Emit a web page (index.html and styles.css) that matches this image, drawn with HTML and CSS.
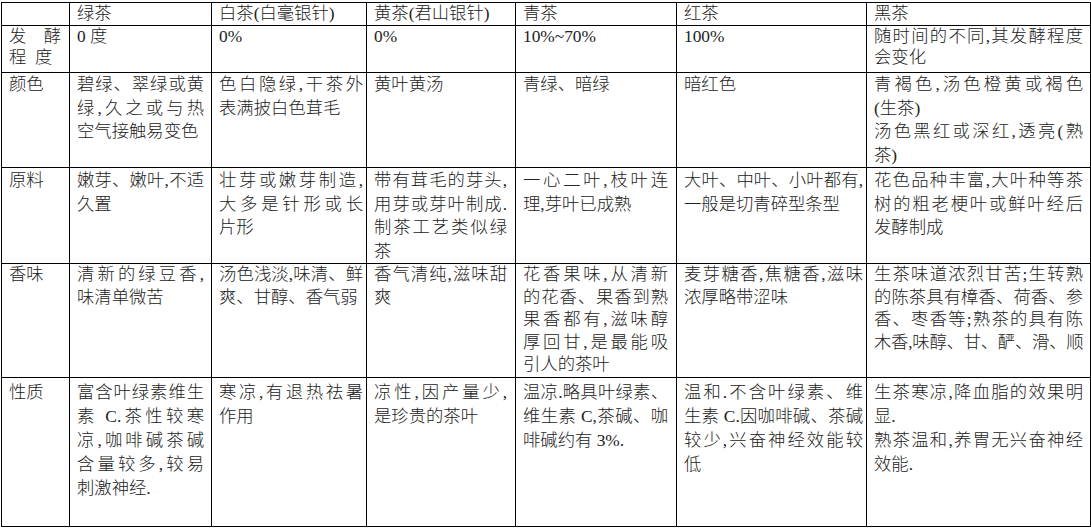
FILE: index.html
```html
<!DOCTYPE html>
<html lang="zh-CN">
<head>
<meta charset="utf-8">
<title>六大茶类对比</title>
<link rel="stylesheet" href="styles.css">
</head>
<body>
<table class="tea">
  <colgroup>
    <col class="k1"><col class="k2"><col class="k3"><col class="k4"><col class="k5"><col class="k6"><col class="k7">
  </colgroup>
  <tr class="r1">
    <td></td><td>绿茶</td><td>白茶(白毫银针)</td><td>黄茶(君山银针)</td><td>青茶</td><td>红茶</td><td>黑茶</td>
  </tr>
  <tr class="r2">
    <td><span class="l">发 酵</span>程&ensp;度</td>
    <td>0 度</td>
    <td>0%</td>
    <td>0%</td>
    <td>10%~70%</td>
    <td>100%</td>
    <td><span class="l">随时间的不同,其发酵程度</span>会变化</td>
  </tr>
  <tr class="r3">
    <td>颜色</td>
    <td><span class="l">碧绿、翠绿或黄</span><span class="l">绿,久之或与热</span>空气接触易变色</td>
    <td><span class="l">色白隐绿,干茶外</span>表满披白色茸毛</td>
    <td>黄叶黄汤</td>
    <td>青绿、暗绿</td>
    <td>暗红色</td>
    <td><span class="l">青褐色,汤色橙黄或褐色</span>(生茶)<span class="l">汤色黑红或深红,透亮(熟</span>茶)</td>
  </tr>
  <tr class="r4">
    <td>原料</td>
    <td><span class="l">嫩芽、嫩叶,不适</span>久置</td>
    <td><span class="l">壮芽或嫩芽制造,</span><span class="l">大多是针形或长</span>片形</td>
    <td><span class="l">带有茸毛的芽头,</span><span class="l">用芽或芽叶制成.</span><span class="l">制茶工艺类似绿</span>茶</td>
    <td><span class="l">一心二叶,枝叶连</span>理,芽叶已成熟</td>
    <td><span class="l">大叶、中叶、小叶都有,</span>一般是切青碎型条型</td>
    <td><span class="l">花色品种丰富,大叶种等茶</span><span class="l">树的粗老梗叶或鲜叶经后</span>发酵制成</td>
  </tr>
  <tr class="r5">
    <td>香味</td>
    <td><span class="l">清新的绿豆香,</span>味清单微苦</td>
    <td><span class="l">汤色浅淡,味清、鲜</span>爽、甘醇、香气弱</td>
    <td><span class="l">香气清纯,滋味甜</span>爽</td>
    <td><span class="l">花香果味,从清新</span><span class="l">的花香、果香到熟</span><span class="l">果香都有,滋味醇</span><span class="l">厚回甘,是最能吸</span>引人的茶叶</td>
    <td><span class="l">麦芽糖香,焦糖香,滋味</span>浓厚略带涩味</td>
    <td><span class="l">生茶味道浓烈甘苦;生转熟</span><span class="l">的陈茶具有樟香、荷香、参</span><span class="l">香、枣香等;熟茶的具有陈</span><span class="l tight">木香,味醇、甘、酽、滑、顺</span></td>
  </tr>
  <tr class="r6">
    <td>性质</td>
    <td><span class="l">富含叶绿素维生</span><span class="l">素 C.茶性较寒</span><span class="l">凉,咖啡碱茶碱</span><span class="l">含量较多,较易</span>刺激神经.</td>
    <td><span class="l">寒凉,有退热祛暑</span>作用</td>
    <td><span class="l">凉性,因产量少,</span>是珍贵的茶叶</td>
    <td><span class="l">温凉.略具叶绿素、</span><span class="l">维生素 C,茶碱、咖</span>啡碱约有 3%.</td>
    <td><span class="l">温和.不含叶绿素、维</span><span class="l">生素 C.因咖啡碱、茶碱</span><span class="l">较少,兴奋神经效能较</span>低</td>
    <td><span class="l">生茶寒凉,降血脂的效果明</span>显.<span class="l">熟茶温和,养胃无兴奋神经</span>效能.</td>
  </tr>
</table>
</body>
</html>
```
FILE: styles.css
```css
html, body {
  margin: 0;
  padding: 0;
  background: #ffffff;
}

.tea {
  border-collapse: collapse;
  table-layout: fixed;
  width: 1090px;
  margin: 2px 0 0 1px;
  font-family: "Liberation Serif", "Noto Sans CJK SC", serif;
  font-size: 13pt;
  font-weight: 300;
  color: #222222;
}

.k1 { width: 68px; }
.k2 { width: 142px; }
.k3 { width: 155px; }
.k4 { width: 149px; }
.k5 { width: 161px; }
.k6 { width: 190px; }
.k7 { width: 224px; }

.tea td {
  border: 1px solid #000000;
  vertical-align: top;
  text-align: left;
  padding: 0 8px 0 7px;
  line-height: 24px;
  overflow: visible;
}

.tea td:nth-child(2) { padding-right: 7px; }
.tea td:nth-child(3),
.tea td:nth-child(6) { padding-right: 3px; }
.tea td:nth-child(7) { padding-right: 7px; }

.l {
  display: block;
  text-align: justify;
  text-align-last: justify;
}

.tight {
  letter-spacing: -0.6px;
}

.r1 { height: 23px; }
.r1 td { line-height: 22px; }

.r2 { height: 47px; }
.r2 td { line-height: 21px; }

.r3 { height: 95px; }
.r3 td { line-height: 23.5px; }

.r4 { height: 96px; }
.r4 td { line-height: 23.5px; padding-top: 1px; }

.r5 { height: 114px; }
.r5 td { line-height: 22.5px; }

.r6 { height: 149px; }
.r6 td { padding-top: 3px; }
```
